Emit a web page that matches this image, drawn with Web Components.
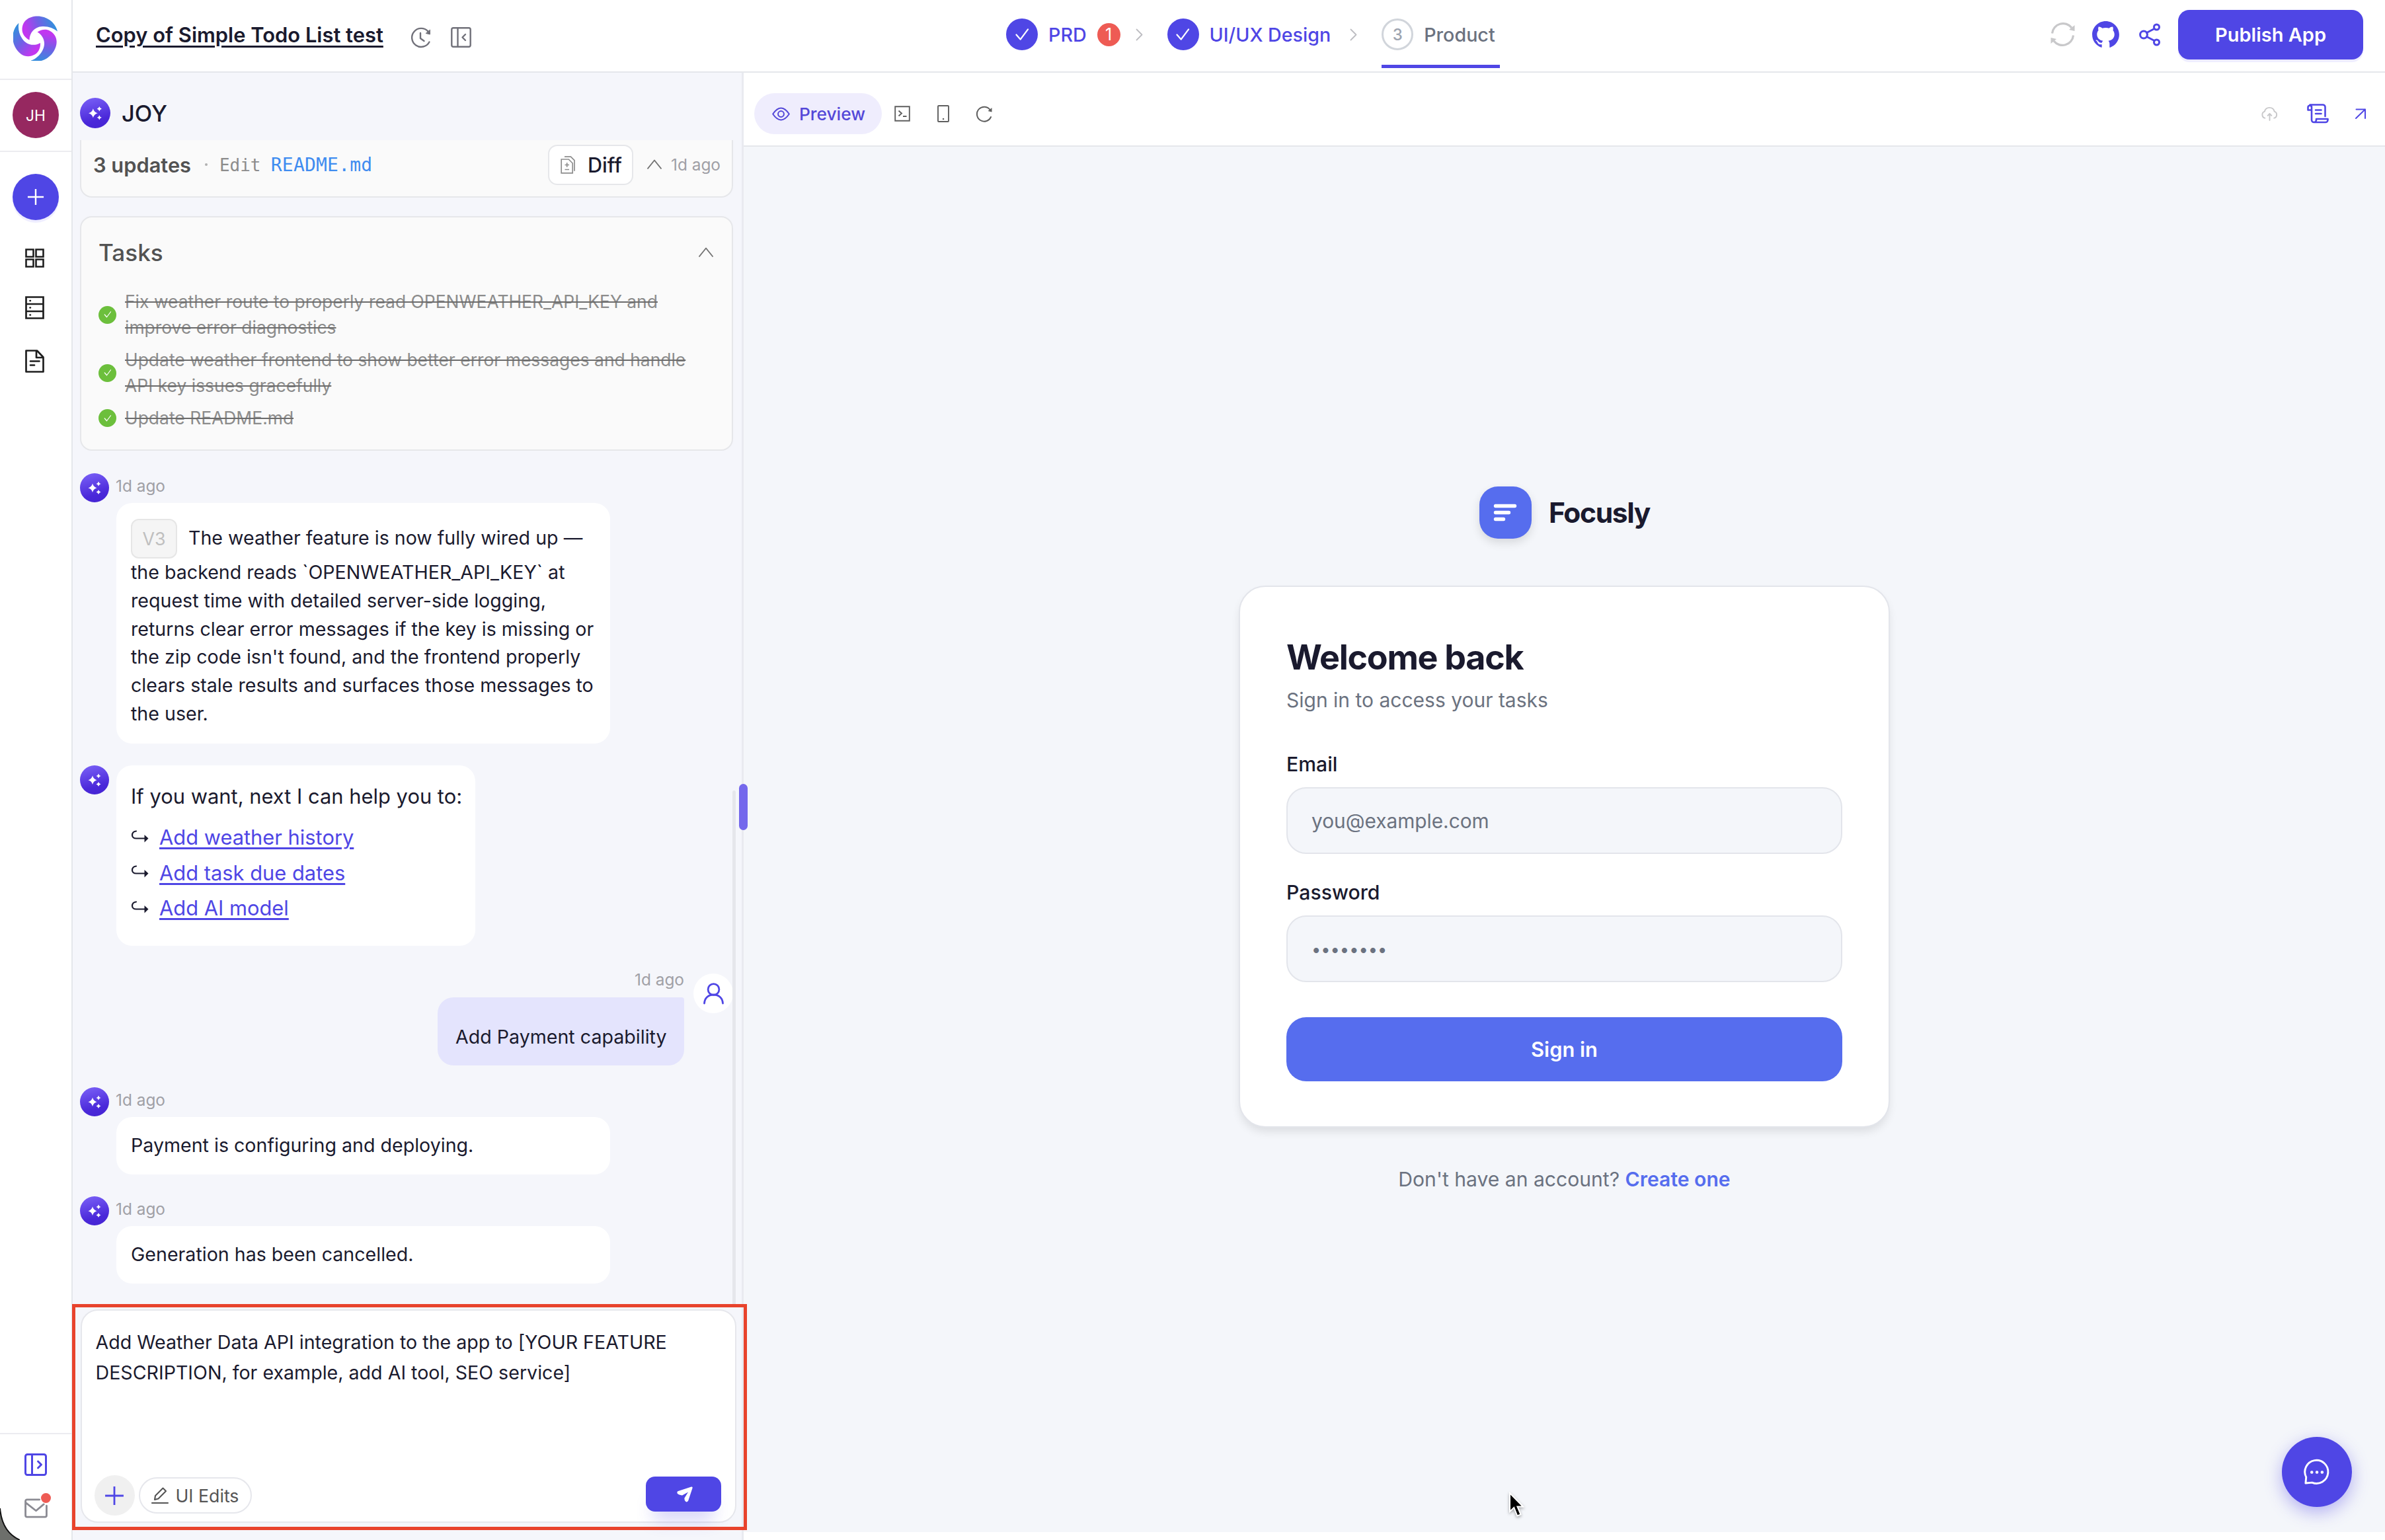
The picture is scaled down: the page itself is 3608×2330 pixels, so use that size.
<!DOCTYPE html>
<html lang="en">
<head>
<meta charset="utf-8">
<title>Copy of Simple Todo List test</title>
<style>
  body {
    margin: 0;
    width: 3608px;
    height: 2330px;
    overflow: hidden;
    background: #fff;
    font-family: Inter, "Liberation Sans", sans-serif;
    color: #1a1a2e;
    --brand: #4f46e5;
    --line: #e5e7eb;
    --muted: #a0a0a6;
  }
</style>
</head>
<body>
<app-shell></app-shell>

<script>
const line = (body, w = 2, vb = '0 0 24 24') =>
  `<svg viewBox="${vb}" fill="none" stroke="currentColor" stroke-width="${w}" stroke-linecap="round" stroke-linejoin="round">${body}</svg>`

// every icon is drawn to fill its box edge to edge
const ICONS = {
  clock: line('<path d="M28.500 22.500A14 14 0 1 1 26.500 6.500"/><path d="M15 9v8l5.500 4"/><path d="M29.500 4.500v6.500l-6-1.500z" fill="currentColor" stroke-width="1"/>', 2.4, '0 0 31 31'),
  collapse: line('<rect x="1.300" y="1.300" width="28.400" height="28.400" rx="2.500"/><path d="M10.500 1.500v28M22 11l-4.500 4.500 4.500 4.500"/>', 2.4, '0 0 31 31'),
  expand: line('<rect x="1.500" y="1.500" width="31" height="31" rx="3"/><path d="M11.500 1.500v31M20.500 12l5 5-5 5"/>', 3, '0 0 34 34'),
  grid: line('<path d="M1.500 1.500h11v11h-11zM16.500 1.500h11v11h-11zM1.500 16.500h11v11h-11zM16.500 16.500h11v11h-11z" stroke-linejoin="miter"/>', 2.6, '0 0 29 29'),
  server: line('<path d="M1.500 1.500h26v32h-26zM1.500 12h26M1.500 23h26" stroke-linejoin="miter"/><path d="M7.500 7h.4M7.500 17.500h.4M7.500 28.500h.4"/>', 2.7, '0 0 29 35'),
  doc: line('<path d="M1.500 1.500h16.500l9.500 10v22h-26zM17 1.500v10.500h10.500M8 17.500h13.500M8 23.500h6"/>', 2.7, '0 0 29 35'),
  mail: line('<path d="M24 2H4a2.500 2.500 0 0 0-2.500 2.500v23A2.500 2.500 0 0 0 4 30h29a2.500 2.500 0 0 0 2.500-2.500V12M2 7l16.500 13L31 9.500"/>', 3, '0 0 37 32'),
  plus: line('<path d="M14 1v26M1 14h26" stroke-linecap="butt"/>', 2.6, '0 0 28 28'),
  check: line('<path d="M1.500 10l6.500 7.500L20 1.500"/>', 2.4, '0 0 22 20'),
  right: line('<path d="M1.500 1.500l8 8-8 8"/>', 1.8, '0 0 11 19'),
  up: line('<path d="M1.500 14.500L12 1.500l10.500 13" stroke-linecap="butt"/>', 1.9, '0 0 24 16'),
  sync: line('<path d="M2.500 17.500A16.500 16.500 0 0 1 32 9M34.500 20.500A16.500 16.500 0 0 1 5 29" stroke-linecap="butt"/><path d="M36.500 5v9l-8.500-2zM.500 33v-9l8.500 2z" fill="currentColor" stroke="none"/>', 3.2, '0 0 37 38'),
  github: '<svg viewBox="64 74 896 876" fill="currentColor"><path d="M511.600 76.300C264.300 76.200 64 276.400 64 523.500 64 718.900 189.300 885 363.800 946c23.500 5.900 19.900-10.800 19.900-22.200v-77.500c-135.700 15.900-141.200-73.900-150.300-88.900C215 726 171.500 718 184.500 703c30.900-15.900 62.400 4 98.900 57.900 26.400 39.100 77.900 32.500 104 26 5.700-23.500 17.900-44.500 34.700-60.800-140.600-25.200-199.200-111-199.200-213 0-49.500 16.300-95 48.300-131.700-20.400-60.500 1.900-112.300 4.900-120 58.100-5.200 118.500 41.600 123.200 45.300 33-8.900 70.700-13.600 112.900-13.600 42.400 0 80.200 4.900 113.500 13.900 11.300-8.600 67.300-48.800 121.300-43.900 2.900 7.700 24.700 58.300 5.500 118 32.400 36.800 48.900 82.700 48.900 132.300 0 102.200-59 188.100-200 212.900a127.500 127.500 0 0 1 38.100 91v112.500c.8 9 0 17.900 15 17.900 177.100-59.700 304.600-227 304.600-424.100 0-247.200-200.400-447.300-447.500-447.300z"/></svg>',
  share: line('<circle cx="7" cy="17.500" r="5.400"/><circle cx="26.500" cy="6" r="4"/><circle cx="26.500" cy="29" r="4"/><path d="M11.500 14.500L23 8.500M11.500 20.500L23 26.500"/>', 3, '0 0 32 35'),
  eye: line('<path d="M1.200 10.500C6 3.500 10 1.200 14 1.200s8 2.300 12.800 9.300C22 17.500 18 19.800 14 19.800S6 17.500 1.200 10.500z"/><circle cx="14" cy="10.500" r="4.600"/>', 2.1, '0 0 28 21'),
  terminal: line('<path d="M1.200 1.200h21.600v21.600H1.200zM6.500 7.500l4.500 4-4.500 4M13 16h5.500" stroke-linejoin="miter" stroke-linecap="butt"/>', 1.9, '0 0 24 24'),
  phone: line('<rect x="1" y="1" width="16" height="24" rx="1"/><path d="M9 21h.1" stroke-width="2.400"/>', 1.9, '0 0 18 26'),
  reload: line('<path d="M23 17A11 11 0 1 1 22 6.500"/><path d="M24.500 3v6.500l-6-1.500z" fill="currentColor" stroke="none"/>', 2, '0 0 25 25'),
  cloud: line('<path d="M6 18.500A5.500 5.500 0 0 1 5.500 8 8 8 0 0 1 21 8a5.500 5.500 0 0 1-.5 10.500M13.500 22V12M10.500 14.500l3-3 3 3"/>', 2, '0 0 27 23'),
  scroll: line('<path d="M7 4v20.500a3.500 3.500 0 0 0 3.500 3.500H28a3.500 3.500 0 0 0 3.500-3.500v-1.500H14v1.500a3.500 3.500 0 0 1-7 0M27.500 19V5A3.500 3.500 0 0 0 24 1.500H4.500M7 9.500H1.500V5a2.800 2.800 0 0 1 5.500 0M13 9.500h8.500M13 15h8.500"/>', 2.6, '0 0 33 30'),
  out: line('<path d="M1 15L15 1.500M1.500 1.500h13.500v13.500"/>', 2, '0 0 16 16'),
  diff: line('<path d="M1.200 5h11l6 6v14.800h-17zM6 1.200h9.500l5.500 5.500v16M6.500 13.500h6.500M9.700 10.300v6.500M6.500 20.500h6.500" stroke-linejoin="miter" stroke-linecap="butt"/>', 1.7, '0 0 22 27'),
  arrow: line('<path d="M7.500 1.500C3.500 2 1.500 4.500 1.500 7.500s2.500 5 6 5H22"/><path d="M20 7l6 5.500-6 6z" fill="currentColor" stroke="none"/>', 2.2, '0 0 26 20'),
  user: line('<circle cx="15.500" cy="10" r="8.400"/><path d="M1.500 31c.5-8 6-13 14-13s13.500 5 14 13"/>', 2.8, '0 0 31 32'),
  pencil: line('<path d="M1 24h24M5 19l1-6L17.500 1.500l4.500 4.500L10.500 17.500z"/>', 2.1, '0 0 26 26'),
  send: '<svg viewBox="0 0 24 24" fill="currentColor"><path d="M2 7L21.800.5q2.300-.5 1.800 1.700L17.200 21.600q-1.500 2.800-4 1.200-1.900-1.600-1.900-5L17 8.500 8 13.400Q3 13.200.8 10.800-.5 8 2 7z"/></svg>',
  chat: line('<path d="M3 37.500l.8-9.500A18 18 0 1 1 13 36.500z"/><path d="M12.500 20.500h.1M20.500 20.500h.1M28.500 20.500h.1" stroke-width="4.600"/>', 3, '0 0 41 40'),
  bars: line('<path d="M2.500 3.500h29M2.500 13.500h20M2.500 23.500h12"/>', 5.4, '0 0 34 27')
}

class AppIcon extends HTMLElement {
  constructor() {
    super()
    this.attachShadow({ mode: 'open' })
  }
  connectedCallback() {
    const { name, w, h } = this.dataset
    this.shadowRoot.innerHTML = `
      <style>
        :host { display: block; flex: none; width: ${w}px; height: ${h || w}px; }
        svg { display: block; width: 100%; height: 100%; overflow: visible; }
      </style>
      ${ICONS[name]}
    `
  }
}
customElements.define('app-icon', AppIcon)

class JoyAvatar extends HTMLElement {
  constructor() {
    super()
    this.attachShadow({ mode: 'open' }).innerHTML = `
      <style>
        :host { display: block; flex: none; width: 44px; height: 44px; border-radius: 50%; background: linear-gradient(165deg, #7c63f8, #4a28d9 70%, #4424d2); }
        svg { display: block; width: 100%; height: 100%; }
      </style>
      <svg viewBox="0 0 44 44" fill="#fff">
        <path d="M19 15.500q1.400 5.300 6.500 6.700-5.100 1.400-6.500 6.700-1.400-5.300-6.500-6.700 5.100-1.400 6.500-6.700z"/>
        <path d="M28 12.500q.7 2.800 3.500 3.500-2.800.7-3.500 3.500-.7-2.800-3.500-3.500 2.800-.7 3.500-3.500zM28 25q.7 2.800 3.500 3.500-2.800.7-3.500 3.500-.7-2.800-3.500-3.500 2.800-.7 3.500-3.500z"/>
      </svg>
    `
  }
}
customElements.define('joy-avatar', JoyAvatar)

class SideRail extends HTMLElement {
  constructor() {
    super()
    this.attachShadow({ mode: 'open' }).innerHTML = `
      <style>
        :host { display: flex; flex-direction: column; align-items: center; box-sizing: border-box; width: 110px; border-right: 2px solid var(--line); position: relative; background: #fff; color: #1f1f1f; }
        .logo { display: block; width: 68px; height: 68px; margin: 24px 0 27px; }
        hr { width: 100%; height: 2px; margin: 0; border: 0; background: #ececf0; flex: none; }
        .user, .add { display: grid; place-items: center; width: 70px; height: 70px; border-radius: 50%; color: #fff; }
        .user { margin: 18px 0 19px; background: #962860; font-size: 22.700px; }
        .add { margin: 33px 0 43px; background: var(--brand); box-shadow: 0 4px 1px #eeedff; }
        .nav { display: flex; flex-direction: column; padding-right: 3px; }
        .grow { flex: 1; }
        .mail { position: relative; margin: 34px 0 33px; color: #8b8b93; }
        .mail i { position: absolute; right: -4px; top: -8px; width: 15px; height: 15px; border-radius: 50%; background: #ee5b54; }
        .corner { position: absolute; left: 0; bottom: 0; width: 30px; height: 48px; }
      </style>
      <svg class="logo" viewBox="-34 -34 68 68">
        <linearGradient id="g" gradientUnits="userSpaceOnUse" x1="-14" y1="-8" x2="28" y2="-22">
          <stop offset="0" stop-color="#c236f0"/><stop offset=".5" stop-color="#7060e6"/><stop offset="1" stop-color="#348fdc"/>
        </linearGradient>
        <g fill="url(#g)">
          <path id="b" d="M33 -10.500C29.500 -25 16 -33.500 3 -33.500C-11 -33.500 -20.500 -26 -20.500 -13C-20.500 -6 -15 0 -9.500 2.500C-9.500 -8 -2 -17.500 10 -18C19 -18.500 27 -15.500 33 -10.500Z"/>
          <use href="#b" transform="rotate(120)"/>
          <use href="#b" transform="rotate(240)"/>
        </g>
      </svg>
      <hr>
      <div class="user">JH</div>
      <hr>
      <div class="add"><app-icon data-name="plus" data-w="26"></app-icon></div>
      <div class="nav">
        <app-icon data-name="grid" data-w="29"></app-icon>
        <app-icon data-name="server" data-w="29" data-h="35" style="margin: 43px 0 46px"></app-icon>
        <app-icon data-name="doc" data-w="29" data-h="35"></app-icon>
      </div>
      <div class="grow"></div>
      <hr>
      <app-icon data-name="expand" data-w="34" style="margin-top: 29px; color: var(--brand)"></app-icon>
      <div class="mail"><app-icon data-name="mail" data-w="37" data-h="30"></app-icon><i></i></div>
      <svg class="corner" viewBox="0 0 30 48"><path d="M0 0C2 24 12 40 30 48H0z" fill="#6d6f6b"/><path d="M0 0C2 24 12 40 30 48" fill="none" stroke="#111" stroke-width="2"/></svg>
    `
  }
}
customElements.define('side-rail', SideRail)

class TopBar extends HTMLElement {
  constructor() {
    super()
    this.attachShadow({ mode: 'open' }).innerHTML = `
      <style>
        :host { display: flex; box-sizing: border-box; height: 110px; padding: 0 33px 0 35px; border-bottom: 2px solid var(--line); background: #fff; }
        .left, .steps, .right { display: flex; align-items: center; }
        .left { width: 1377px; padding-bottom: 2px; color: #71717a; }
        h1 { margin: 0 41px 0 0; font-size: 30.900px; line-height: 40px; font-weight: 600; color: #1a1a2e; text-decoration: underline; text-decoration-thickness: 3px; text-underline-offset: 5px; white-space: nowrap; }
        .left app-icon { margin: 7px 30px 0 0; }
        .steps { align-items: flex-start; }
        .step { display: flex; align-items: center; box-sizing: border-box; height: 103px; padding: 6px 8px 0 0; border-bottom: 5px solid transparent; font-size: 28.650px; font-weight: 500; color: var(--brand); white-space: nowrap; }
        .num { display: grid; place-items: center; box-sizing: border-box; width: 48px; height: 48px; margin-right: 16px; border-radius: 50%; background: var(--brand); color: #fff; }
        .now { padding-right: 7px; color: #6b7280; border-color: var(--brand); }
        .now .num { border: 3px solid #d1d5db; background: none; color: #9ca3af; font-size: 24px; }
        .badge { display: grid; place-items: center; width: 35px; height: 35px; margin-left: 16px; border-radius: 50%; background: #ee5b54; color: #fff; font-size: 25px; font-weight: 400; }
        .steps > app-icon { margin-top: 43px; color: #bdbdc2; }
        .right { flex: 1; justify-content: flex-end; padding-bottom: 4px; color: var(--brand); }
        .publish { display: grid; place-items: center; width: 280px; height: 75px; margin-left: 27px; border-radius: 17px; background: var(--brand); box-shadow: 0 4px 1px #eeedff; color: #fff; font-size: 29px; font-weight: 600; }
      </style>
      <div class="left">
        <h1>Copy of Simple Todo List test</h1>
        <app-icon data-name="clock" data-w="31"></app-icon>
        <app-icon data-name="collapse" data-w="31"></app-icon>
      </div>
      <div class="steps">
        <div class="step"><span class="num"><app-icon data-name="check" data-w="21" data-h="19"></app-icon></span>PRD<span class="badge">1</span></div>
        <app-icon data-name="right" data-w="11" data-h="19" style="margin-left: 15px; margin-right: 37px"></app-icon>
        <div class="step"><span class="num"><app-icon data-name="check" data-w="21" data-h="19"></app-icon></span>UI/UX Design</div>
        <app-icon data-name="right" data-w="11" data-h="19" style="margin-left: 21px; margin-right: 37px"></app-icon>
        <div class="step now"><span class="num">3</span>Product</div>
      </div>
      <div class="right">
        <app-icon data-name="sync" data-w="37" data-h="38" style="color: #c8c8ca"></app-icon>
        <app-icon data-name="github" data-w="41" data-h="40" style="margin: 0 30px 0 26px"></app-icon>
        <app-icon data-name="share" data-w="32" data-h="35"></app-icon>
        <div class="publish">Publish App</div>
      </div>
    `
  }
}
customElements.define('top-bar', TopBar)

class ChatMessage extends HTMLElement {
  constructor() {
    super()
    this.attachShadow({ mode: 'open' })
  }
  connectedCallback() {
    const { from, time } = this.dataset
    this.shadowRoot.innerHTML = `
      <style>
        :host { display: flex; gap: 11px; margin-top: 33px; font-size: 28.600px; line-height: 42.800px; white-space: nowrap; }
        :host([data-from=me]) { flex-direction: row-reverse; gap: 14px; margin-top: 42px; }
        .time { height: 45px; margin-left: -1px; font-size: 24.400px; line-height: 38px; color: var(--muted); }
        .bubble { box-sizing: border-box; width: var(--w, 747px); min-height: var(--h, 87px); padding: var(--pad, 22px) 0 22px 22px; border-radius: 24px; background: #fff; }
        .me { display: grid; place-items: center; flex: none; width: 60px; height: 60px; border-radius: 50%; background: #fff; color: var(--brand); }
        :host([data-from=me]) .time { height: 36px; line-height: 18px; text-align: right; }
        :host([data-from=me]) .bubble { padding: 39px 0 21px 27px; border-radius: 24px 4px 24px 24px; background: #e4e4fd; }
      </style>
      ${from === 'me' ? '<div class="me"><app-icon data-name="user" data-w="31" data-h="32"></app-icon></div>' : '<joy-avatar></joy-avatar>'}
      <div>
        ${time ? `<div class="time">${time}</div>` : ''}
        <div class="bubble"><slot></slot></div>
      </div>
    `
  }
}
customElements.define('chat-message', ChatMessage)

class TaskItem extends HTMLElement {
  constructor() {
    super()
    this.attachShadow({ mode: 'open' }).innerHTML = `
      <style>
        :host { display: flex; align-items: center; gap: 13px; margin-bottom: 10px; font-size: 26.450px; line-height: 39px; color: #8c8c8c; white-space: nowrap; }
        .dot { display: grid; place-items: center; width: 27px; height: 27px; border-radius: 50%; background: #6cbf3c; color: #fff; }
        .text { text-decoration: line-through; text-decoration-thickness: 2px; text-decoration-color: #6b6b6b; }
      </style>
      <span class="dot"><app-icon data-name="check" data-w="12" data-h="10"></app-icon></span>
      <span class="text"><slot></slot></span>
    `
  }
}
customElements.define('task-item', TaskItem)

class ChatPanel extends HTMLElement {
  constructor() {
    super()
    this.attachShadow({ mode: 'open' }).innerHTML = `
      <style>
        :host { display: flex; flex-direction: column; box-sizing: border-box; position: relative; z-index: 1; width: 1015px; padding: 0 0 0 11px; border-right: 3px solid #e9eaf0; background: #f5f6fb; }
        .head { display: flex; align-items: center; gap: 17px; height: 82px; padding-top: 20px; font-size: 34.500px; font-weight: 500; }
        .head joy-avatar { width: 46px; height: 46px; }
        .log { height: 1763px; width: 988px; overflow: hidden; }
        .card { box-sizing: border-box; border: 2px solid #e6e7ea; border-radius: 18px; background: #fafafa; color: #525252; }
        .updates { display: flex; align-items: center; height: 87px; padding: 0 17px 11px 18px; border-top: 0; border-radius: 0 0 18px 18px; white-space: nowrap; }
        .updates b { font-size: 30.800px; font-weight: 600; }
        .edit { margin-left: 18px; font: 26px "DejaVu Sans Mono", monospace; letter-spacing: -.1px; color: #8c8c8c; }
        .edit a { font-size: 28px; letter-spacing: .2px; color: #3f8cf0; }
        .sep { margin-left: 21px; width: 4px; height: 4px; border-radius: 50%; background: #b0b0b0; }
        .diff { display: flex; align-items: center; box-sizing: border-box; width: 129px; height: 61px; margin: 0 20px 0 auto; padding-left: 17px; gap: 19px; border: 2px solid #e6e7ea; border-radius: 14px; background: #fff; color: #8c8c8c; }
        .diff span { font-size: 30.600px; font-weight: 500; color: #1a1a2e; }
        .ago { margin-left: 13px; font-size: 24.400px; color: var(--muted); }
        .updates > app-icon { color: #737373; }
        .tasks { height: 355px; margin: 28px 0 34px; padding: 31px 27px 0 26px; }
        .tasks h2 { display: flex; justify-content: space-between; align-items: center; margin: 0 0 33px; height: 44px; font-size: 35.100px; font-weight: 500; }
        .tasks h2 app-icon { color: #737373; }
        .v { display: inline-block; box-sizing: border-box; width: 70px; height: 60px; margin-right: 17px; border: 2px solid #e6e6e6; border-radius: 12px; background: #f5f5f5; color: #bfbfbf; font-size: 26.800px; line-height: 56px; text-align: center; vertical-align: -1px; }
        .next { font-size: 30.900px; line-height: 48px; margin: 1px 0 12px; }
        .sug { display: flex; align-items: center; gap: 16px; height: 53.500px; font-size: 30.850px; color: #1a1a2e; }
        .sug a { color: var(--brand); text-decoration: underline; text-decoration-thickness: 2.500px; text-underline-offset: 4px; }
        .sug app-icon { margin-top: -4px; }
        .bar { position: absolute; right: 9px; top: 1086px; width: 5px; height: 778px; border-radius: 3px 3px 0 0; background: #e6e7ec; }
        .grip { position: absolute; z-index: 1; right: -9px; top: 1076px; width: 13px; height: 70px; border-radius: 7px; background: #7468ec; }
        .composer { display: flex; flex-direction: column; box-sizing: border-box; width: 992px; height: 323px; margin: 6px 0 0 1px; padding: 25px 21px 9px 20.500px; border: 2px solid #e6e7ec; border-radius: 26px; background: #fff; font-size: 28.600px; line-height: 46px; white-space: nowrap; }
        .tools { display: flex; align-items: center; gap: 6px; margin-top: auto; margin-left: -2px; }
        .plus { display: grid; place-items: center; width: 61px; height: 61px; border-radius: 50%; background: #f0f0f0; color: var(--brand); }
        .pill { display: flex; align-items: center; gap: 11px; box-sizing: border-box; width: 171px; height: 55px; padding-left: 17px; border: 2px solid #e6e7ec; border-radius: 28px; color: #555; font-size: 26.700px; }
        .send { display: grid; place-items: center; box-sizing: border-box; width: 114px; height: 53px; margin: 0 0 4px auto; padding-left: 4px; border-radius: 14px; background: var(--brand); box-shadow: 0 24px 26px -12px #4f46e540; color: #fff; }
        .mark { position: absolute; left: -1px; top: 1863px; width: 1011px; height: 332px; border: 5px solid #e8432c; }
      </style>
      <div class="head"><joy-avatar></joy-avatar>JOY</div>
      <div class="log">
        <div class="card updates">
          <b>3 updates</b><i class="sep"></i><span class="edit">Edit <a>README.md</a></span>
          <div class="diff"><app-icon data-name="diff" data-w="22" data-h="27"></app-icon><span>Diff</span></div>
          <app-icon data-name="up" data-w="24" data-h="16"></app-icon><span class="ago">1d ago</span>
        </div>
        <div class="card tasks">
          <h2>Tasks<app-icon data-name="up" data-w="24" data-h="16"></app-icon></h2>
          <task-item>Fix weather route to properly read OPENWEATHER_API_KEY and<br>improve error diagnostics</task-item>
          <task-item>Update weather frontend to show better error messages and handle<br>API key issues gracefully</task-item>
          <task-item>Update README.md</task-item>
        </div>
        <chat-message data-time="1d ago" style="--pad: 24px; --h: 364px"><span class="v">V3</span>The weather feature is now fully wired up —<br>the backend reads \`OPENWEATHER_API_KEY\` at<br>request time with detailed server-side logging,<br>returns clear error messages if the key is missing or<br>the zip code isn't found, and the frontend properly<br>clears stale results and surfaces those messages to<br>the user.</chat-message>
        <chat-message style="--w: 543px; --h: 273px">
          <div class="next">If you want, next I can help you to:</div>
          <div class="sug"><app-icon data-name="arrow" data-w="27" data-h="20"></app-icon><a>Add weather history</a></div>
          <div class="sug"><app-icon data-name="arrow" data-w="27" data-h="20"></app-icon><a>Add task due dates</a></div>
          <div class="sug"><app-icon data-name="arrow" data-w="27" data-h="20"></app-icon><a>Add AI model</a></div>
        </chat-message>
        <chat-message data-from="me" data-time="1d ago" style="--w: 373px">Add Payment capability</chat-message>
        <chat-message data-time="1d ago">Payment is configuring and deploying.</chat-message>
        <chat-message data-time="1d ago">Generation has been cancelled.</chat-message>
      </div>
      <div class="composer">
        <div>Add Weather Data API integration to the app to [YOUR FEATURE<br>DESCRIPTION, for example, add AI tool, SEO service]</div>
        <div class="tools">
          <div class="plus"><app-icon data-name="plus" data-w="30"></app-icon></div>
          <div class="pill"><app-icon data-name="pencil" data-w="26"></app-icon>UI Edits</div>
          <div class="send"><app-icon data-name="send" data-w="24"></app-icon></div>
        </div>
      </div>
      <i class="bar"></i><i class="grip"></i>
      <div class="mark"></div>
    `
  }
}
customElements.define('chat-panel', ChatPanel)

class FormField extends HTMLElement {
  constructor() {
    super()
    this.attachShadow({ mode: 'open' })
  }
  connectedCallback() {
    const { label, hint } = this.dataset
    this.shadowRoot.innerHTML = `
      <style>
        :host { display: block; }
        label { display: block; height: 57px; font-size: 30.200px; line-height: 44px; font-weight: 500; color: #1a1a2e; }
        .box { display: flex; align-items: center; box-sizing: border-box; height: 101px; padding-left: 36px; border: 2px solid #e3e5eb; border-radius: 30px; background: #f4f6fa; color: #6b7280; font-size: var(--hint, 29.800px); }
      </style>
      <label>${label}</label>
      <div class="box">${hint}</div>
    `
  }
}
customElements.define('form-field', FormField)

class SignIn extends HTMLElement {
  constructor() {
    super()
    this.attachShadow({ mode: 'open' }).innerHTML = `
      <style>
        :host { display: flex; flex-direction: column; align-items: center; padding-top: 514px; white-space: nowrap; }
        .brand { display: flex; align-items: center; gap: 26px; margin: 0 -1px 71px 0; font-size: 42.500px; font-weight: 700; letter-spacing: -.032em; }
        .mark { display: grid; place-items: center; width: 79px; height: 79px; border-radius: 28px; background: #566dee; box-shadow: 0 6px 14px #0000001f; color: #fff; }
        .card { box-sizing: border-box; width: 985px; height: 820px; padding: 71px 70px 0; border: 2px solid #e3e5eb; border-radius: 40px; background: #fff; box-shadow: 0 8px 14px -2px #0000001a; }
        h1 { margin: 0; font-size: 52px; line-height: 71px; font-weight: 700; letter-spacing: -.025em; }
        p { margin: 6px 0 52px; font-size: 30px; line-height: 46px; color: #6b7280; }
        form-field + form-field { margin-top: 36px; --hint: 25.400px; }
        .go { display: grid; place-items: center; height: 97px; margin-top: 53px; border-radius: 30px; background: #566dee; color: #fff; font-size: 30.800px; font-weight: 600; }
        .foot { margin-top: 56px; font-size: 30.100px; line-height: 44px; color: #6b7280; }
        .foot a { font-weight: 600; color: #566dee; }
      </style>
      <div class="brand"><span class="mark"><app-icon data-name="bars" data-w="34" data-h="27"></app-icon></span>Focusly</div>
      <div class="card">
        <h1>Welcome back</h1>
        <p>Sign in to access your tasks</p>
        <form-field data-label="Email" data-hint="you@example.com"></form-field>
        <form-field data-label="Password" data-hint="••••••••"></form-field>
        <div class="go">Sign in</div>
      </div>
      <div class="foot">Don't have an account? <a>Create one</a></div>
    `
  }
}
customElements.define('sign-in', SignIn)

class PreviewPane extends HTMLElement {
  constructor() {
    super()
    this.attachShadow({ mode: 'open' }).innerHTML = `
      <style>
        :host { display: block; flex: 1; position: relative; }
        .bar { display: flex; align-items: center; box-sizing: border-box; height: 112px; padding: 16px 29px 2px 16px; border-bottom: 2px solid var(--line); background: #fff; color: #5f5f5f; }
        .tab { display: flex; align-items: center; gap: 14px; box-sizing: border-box; width: 193px; height: 62px; margin-right: 19px; padding-left: 27px; border-radius: 31px; background: #efedfd; color: #5448d8; font-size: 26.300px; font-weight: 500; }
        .bar > app-icon { margin-right: 41px; }
        sign-in { box-sizing: border-box; height: 2096px; background: #f4f6fa; }
        .fab { position: absolute; right: 50px; top: 2064px; display: grid; place-items: center; width: 106px; height: 106px; border-radius: 50%; background: var(--brand); color: #fff; box-shadow: 0 8px 26px #4f46e566; }
        .cursor { position: absolute; left: 1157px; top: 2147px; width: 24px; height: 40px; filter: drop-shadow(0 2px 2px #0005); }
      </style>
      <div class="bar">
        <div class="tab"><app-icon data-name="eye" data-w="27" data-h="21"></app-icon>Preview</div>
        <app-icon data-name="terminal" data-w="24"></app-icon>
        <app-icon data-name="phone" data-w="18" data-h="26" style="margin-right: 40px"></app-icon>
        <app-icon data-name="reload" data-w="25"></app-icon>
        <app-icon data-name="cloud" data-w="27" data-h="22" style="margin: 0 43px 0 auto; color: #c8c8ca"></app-icon>
        <app-icon data-name="scroll" data-w="33" data-h="30" style="margin-right: 40px; color: var(--brand)"></app-icon>
        <app-icon data-name="out" data-w="16" style="margin-right: 0; color: var(--brand)"></app-icon>
      </div>
      <sign-in></sign-in>
      <div class="fab"><app-icon data-name="chat" data-w="40" data-h="40"></app-icon></div>
      <svg class="cursor" viewBox="0 0 24 40"><path d="M2 2v28l6.300-6 5 12.500 5.200-2.200L13.500 22.500H22z" fill="#000" stroke="#fff" stroke-width="2"/></svg>
    `
  }
}
customElements.define('preview-pane', PreviewPane)

class AppShell extends HTMLElement {
  constructor() {
    super()
    this.attachShadow({ mode: 'open' }).innerHTML = `
      <style>
        :host { display: flex; width: 3608px; height: 2330px; }
        main { display: flex; flex-direction: column; flex: 1; }
        section { display: flex; flex: 1; }
      </style>
      <side-rail></side-rail>
      <main>
        <top-bar></top-bar>
        <section>
          <chat-panel></chat-panel>
          <preview-pane></preview-pane>
        </section>
      </main>
    `
  }
}
customElements.define('app-shell', AppShell)
</script>
</body>
</html>
